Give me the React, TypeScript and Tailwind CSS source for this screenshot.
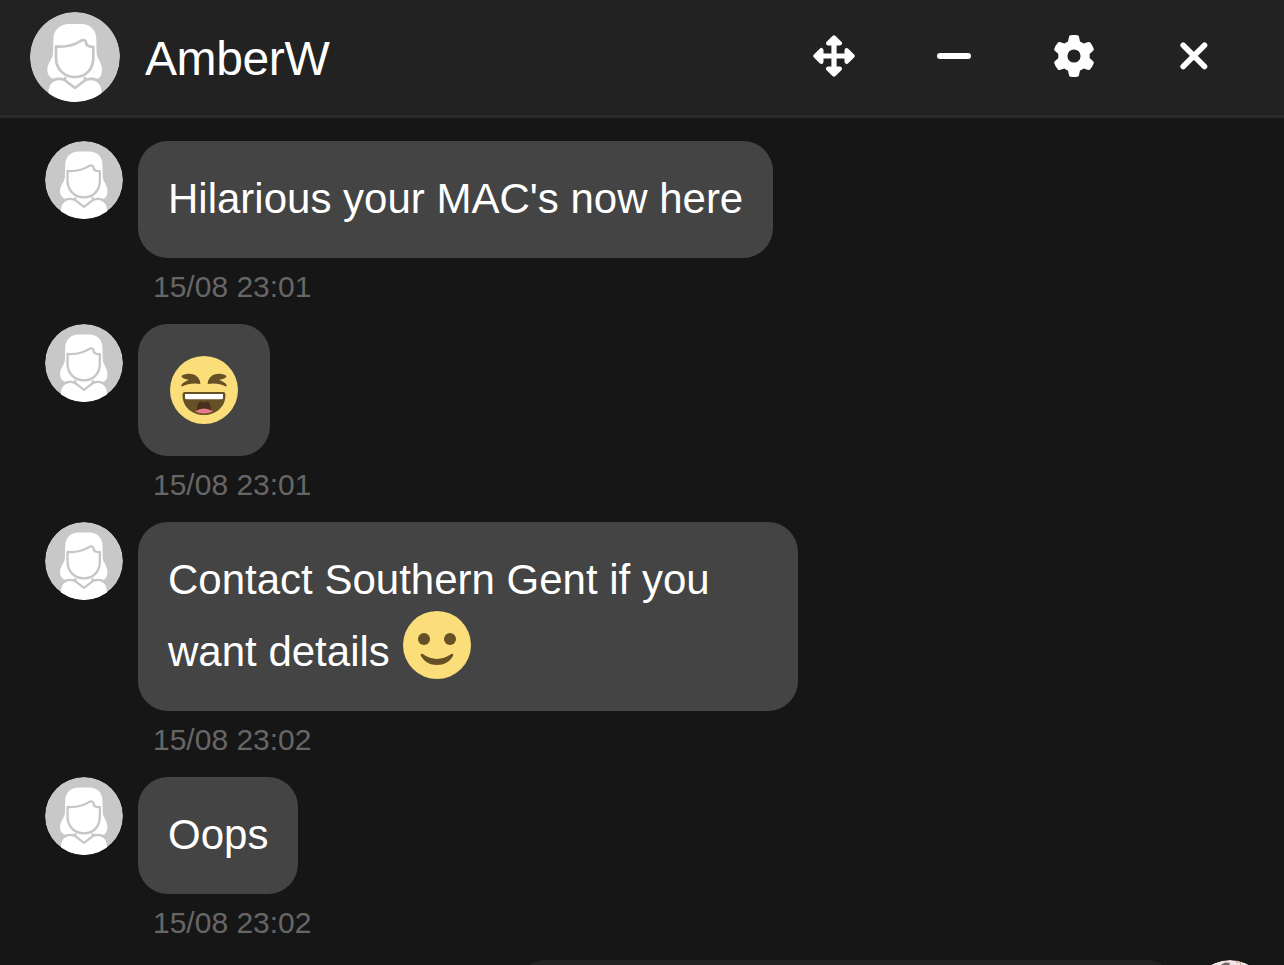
import type { ReactNode } from "react";

function Avatar({ className }: { className: string }) {
  return (
    <svg viewBox="0 0 90 90" className={`${className} shrink-0 rounded-full`}>
      <circle cx="45" cy="45" r="45" fill="#c8c8c8" />
      <path
        d="M23 42 L23.300 28 C23.300 17 31 12 39 12 H51 C60 12 66.300 18 66.300 27 L66.600 42 C68 48 72 51 72 58 C72 66 67 68 61 68 H29 C22 68 17.300 64 17.300 58 C17.300 51 22 48 23 42Z"
        fill="#fff"
      />
      <path
        d="M18.500 84 V80 C18.500 72 24 67.500 31 67.500 L36 65 H54 L59 67.500 C66 67.500 71.500 72 71.500 80 V83 C63 89 54 91 45 91 C35 91 26 89 18.500 82Z"
        fill="#fff"
      />
      <path
        d="M26 34.600 C36 35.200 44 33.500 50.500 29 C53.500 27.200 56 28.500 56 30.500 C56 33.500 58 34.800 63.300 34.800 V46 C63.300 57 56 65 45 65 C34 65 26 57 26 46Z M35.500 65 L34.500 68 L45 76 L55.500 68 L54.500 65 M19 71.500 C23 67 28 65.500 34.500 68 M71 71.500 C67 67 62 65.500 55.500 68"
        fill="none"
        stroke="#c8c5c6"
        strokeWidth="2.700"
        strokeLinejoin="round"
      />
    </svg>
  );
}

function Laugh() {
  return (
    <svg viewBox="0 0 68 68" className="mx-[2px] mt-[2px] inline-block size-[68px] align-[-12px]">
      <circle cx="34" cy="34" r="34" fill="#fbde79" />
      <path
        d="M12 19.500 C16 17 24 17 27.500 21 C29.500 23 30.500 26 30.300 28 C24 26.500 17 28 12 30.500 C9.500 30 13 26 19 23.800 C15 23.200 10.500 22 12 19.500Z M56 19.500 C52 17 44 17 40.500 21 C38.500 23 37.500 26 37.700 28 C44 26.500 51 28 56 30.500 C58.500 30 55 26 49 23.800 C53 23.200 57.500 22 56 19.500Z M15 36 H53 Q55.500 36 55.500 39 C55.500 51 46 59 34 59 C22 59 12.500 51 12.500 39 Q12.500 36 15 36Z"
        fill="#665026"
      />
      <path d="M27 54 C27 47 30 44 33 46 L34 47 L35 46 C38 44 41 47 41 54Z" fill="#46301b" />
      <path d="M15 38 H53 V42 Q53 43.300 51.700 43.300 H16.300 Q15 43.300 15 42Z" fill="#fff" />
      <path d="M25 55.500 Q34 49.500 43 55.500 Q34 59.500 25 55.500Z" fill="#e8798b" />
    </svg>
  );
}

function Smile() {
  return (
    <svg viewBox="0 0 68 68" className="mx-[2px] mt-[2px] inline-block size-[68px] align-[-12px]">
      <circle cx="34" cy="34" r="34" fill="#fbde79" />
      <circle cx="21" cy="28" r="6" fill="#665026" />
      <circle cx="47" cy="28" r="6" fill="#665026" />
      <path d="M18 45 C17.200 43 18.500 42.300 20 43.300 C29 49.500 39 49.500 48 43.300 C49.500 42.300 50.800 43 50 45 C46.500 51 41 54 34 54 C27 54 21.500 51 18 45Z" fill="#665026" />
    </svg>
  );
}

function Message({ time, children }: { time: string; children: ReactNode }) {
  return (
    <div className="flex items-start gap-[15px]">
      <Avatar className="size-[78px]" />
      <div className="flex flex-col items-start">
        <div className="max-w-[660px] rounded-[30px] bg-[#444444] p-[30px] text-[42px] leading-[57px] text-white">
          {children}
        </div>
        <time className="flex h-[66px] items-start pt-[12px] pl-[15px] text-[30px] leading-[34px] text-[#666666]">
          {time}
        </time>
      </div>
    </div>
  );
}

function Words({ children }: { children: ReactNode }) {
  return <span className="relative -top-px">{children}</span>;
}

export default function App() {
  return (
    <div className="flex h-[965px] w-[1284px] flex-col overflow-hidden bg-[#161616] font-['Liberation_Sans',Arial,sans-serif]">
      <header className="flex h-[118px] shrink-0 items-start border-b-[3px] border-[#2b2b2b] bg-[#222222] pt-[12px] pr-[30px] pl-[30px] text-white">
        <Avatar className="size-[90px]" />
        <h1 className="ml-[25px] flex h-[90px] items-center pt-[4px] text-[48px] leading-[54px] tracking-[-0.4px]">AmberW</h1>
        <div className="ml-auto flex h-[88px] items-center">
          <button className="flex w-[120px] justify-center" aria-label="Move">
            <svg viewBox="0 0 42 42" className="size-[42px]" fill="currentColor">
              <path d="M21 4 V38 M4 21 H38" fill="none" stroke="currentColor" strokeWidth="5.200" />
              <path
                d="M21 2.500 L26.800 8.300 H15.200Z M39.500 21 L33.700 26.800 V15.200Z M21 39.500 L15.200 33.700 H26.800Z M2.500 21 L8.300 15.200 V26.800Z"
                stroke="currentColor"
                strokeWidth="4.400"
                strokeLinejoin="round"
              />
            </svg>
          </button>
          <button className="flex w-[119px] justify-center" aria-label="Minimize">
            <span className="h-[6px] w-[34px] rounded-full bg-white" />
          </button>
          <button className="ml-px flex w-[120px] justify-center" aria-label="Settings">
            <svg viewBox="0 0 512 512" className="size-[42px]" fill="currentColor">
              <path d="M495.900 166.600c3.200 8.700.5 18.400-6.400 24.600l-43.300 39.400c1.100 8.300 1.700 16.800 1.700 25.400s-.6 17.100-1.700 25.400l43.300 39.400c6.900 6.200 9.600 15.900 6.400 24.600c-4.400 11.900-9.700 23.300-15.800 34.300l-4.700 8.100c-6.600 11-14 21.400-22.100 31.200c-5.900 7.200-15.700 9.600-24.500 6.800l-55.700-17.700c-13.400 10.300-28.200 18.900-44 25.400l-12.500 57.100c-2 9.100-9 16.300-18.200 17.800c-13.800 2.300-28 3.500-42.500 3.500s-28.700-1.200-42.500-3.500c-9.200-1.500-16.200-8.700-18.200-17.800l-12.500-57.100c-15.800-6.500-30.600-15.100-44-25.400L83.100 425.900c-8.800 2.800-18.600.3-24.500-6.800c-8.100-9.800-15.500-20.200-22.100-31.200l-4.700-8.100c-6.100-11-11.400-22.400-15.800-34.300c-3.200-8.700-.5-18.400 6.400-24.600l43.300-39.400C64.600 273.100 64 264.600 64 256s.6-17.100 1.700-25.400L22.400 191.200c-6.900-6.200-9.600-15.900-6.400-24.600c4.400-11.900 9.700-23.300 15.800-34.300l4.700-8.100c6.600-11 14-21.400 22.100-31.200c5.900-7.200 15.700-9.600 24.500-6.800l55.700 17.700c13.400-10.300 28.200-18.900 44-25.400l12.500-57.100c2-9.100 9-16.300 18.200-17.800C227.300 1.200 241.500 0 256 0s28.700 1.200 42.500 3.500c9.200 1.500 16.200 8.700 18.200 17.800l12.500 57.100c15.800 6.500 30.600 15.100 44 25.400l55.700-17.700c8.800-2.800 18.600-.3 24.500 6.800c8.100 9.800 15.500 20.200 22.100 31.200l4.700 8.100c6.100 11 11.400 22.400 15.800 34.300zM256 336a80 80 0 1 0 0-160 80 80 0 1 0 0 160z" />
            </svg>
          </button>
          <button className="flex w-[120px] justify-center" aria-label="Close">
            <svg viewBox="0 0 28 28" className="size-[28px]">
              <path d="M3.200 3.200 L24.500 24.500 M24.500 3.200 L3.200 24.500" stroke="currentColor" strokeWidth="5.600" strokeLinecap="round" />
            </svg>
          </button>
        </div>
      </header>
      <main className="flex flex-col pt-[23px] pr-[15px] pl-[45px]">
        <Message time="15/08 23:01">
          <Words>Hilarious your MAC's now here</Words>
        </Message>
        <Message time="15/08 23:01">
          <Laugh />
        </Message>
        <Message time="15/08 23:02">
          <Words>Contact Southern Gent if you want details</Words> <Smile />
        </Message>
        <Message time="15/08 23:02">
          <Words>Oops</Words>
        </Message>
        <div className="flex h-[117px] items-start justify-end gap-[15px]">
          <div className="h-[117px] w-[660px] rounded-[30px] bg-[#222222]" />
          <svg viewBox="0 0 78 78" className="size-[78px] rounded-full">
            <circle cx="39" cy="39" r="39" fill="#f3e4e4" />
            <path d="M28 6 L34 2.500 L39 3 L38 6Z" fill="#6b6668" />
            <path d="M45 1 l2 2 M49 2 l1 3" stroke="#c9a79a" strokeWidth="1.200" />
          </svg>
        </div>
      </main>
    </div>
  );
}
